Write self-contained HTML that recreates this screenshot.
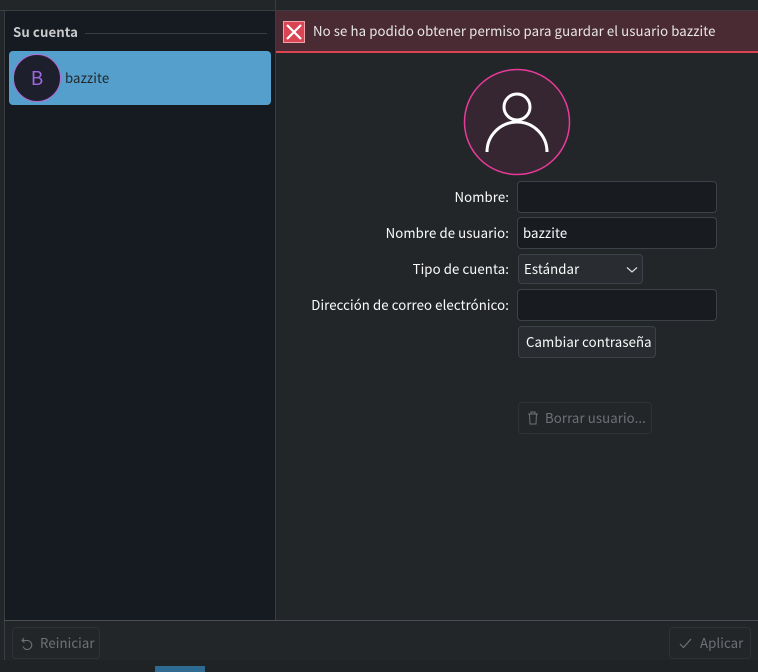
<!DOCTYPE html>
<html><head><meta charset="utf-8"><style>
*{box-sizing:border-box;margin:0;padding:0}
body{width:758px;height:672px;background:#232629;font-family:"Noto Sans CJK JP","Liberation Sans",sans-serif;font-size:13.2px;letter-spacing:0.1px;color:#fcfcfc;position:relative;overflow:hidden}
.a{position:absolute}
.lbl{position:absolute;right:249px;text-align:right;white-space:nowrap;color:#fcfcfc}
.inp{position:absolute;left:517px;width:200px;height:32px;border:1px solid #3d4248;border-radius:4px;background:#181c21}
.btn{position:absolute;border:1px solid #3d4248;border-radius:4px;background:#292c30;white-space:nowrap}
</style></head><body>
<div class="a" style="left:0;top:0;width:758px;height:11px;background:#232629;border-bottom:1px solid #3a3e44"></div>
<div class="a" style="left:275px;top:0;width:1px;height:11px;background:#3a3e44"></div>
<div class="a" style="left:4px;top:11px;width:272px;height:610px;background:#161b21;border-left:1px solid #3a3e44;border-right:1px solid #3a3e44"></div>
<div class="a" style="left:13px;top:22px;font-weight:bold;color:#c8cacc">Su cuenta</div>
<div class="a" style="left:85px;top:33px;width:182px;height:1px;background:#3a3e44"></div>
<div class="a" style="left:9px;top:51px;width:262px;height:54px;background:#549fcc;border-radius:4px"></div>
<div class="a" style="left:13px;top:54px;width:48px;height:48px;border-radius:50%;background:#1e1f2c;border:1.5px solid #b36ad6;color:#9f67e0;font-size:19px;text-align:center;line-height:45px">B</div>
<div class="a" style="left:65px;top:68px;color:#232629">bazzite</div>
<div class="a" style="left:276px;top:11px;width:482px;height:42px;background:#4a2a33;border-bottom:2px solid #da4453"></div>
<svg class="a" style="left:283px;top:21px" width="22" height="22"><rect x="0.5" y="0.5" width="21" height="21" fill="#da4453" stroke="#f0a0a8"/><path d="M4 4L18 18M18 4L4 18" stroke="#fff" stroke-width="2.2"/></svg>
<div class="a" style="left:313px;top:21px;color:#e8e8e8">No se ha podido obtener permiso para guardar el usuario bazzite</div>
<svg class="a" style="left:463px;top:68px" width="108" height="108"><circle cx="54" cy="54" r="52.5" fill="#352632" stroke="#e93a9a" stroke-width="1.5"/><circle cx="54" cy="39" r="13" fill="none" stroke="#fff" stroke-width="3"/><path d="M24 84A30 30 0 0 1 84 84" fill="none" stroke="#fff" stroke-width="3"/></svg>
<div class="lbl" style="top:187px">Nombre:</div>
<div class="inp" style="top:181px"></div>
<div class="lbl" style="top:223px">Nombre de usuario:</div>
<div class="inp" style="top:217px"><span class="a" style="left:5px;top:5px">bazzite</span></div>
<div class="lbl" style="top:259px">Tipo de cuenta:</div>
<div class="btn" style="left:518px;top:254px;width:125px;height:30px"><span class="a" style="left:5px;top:4px">Estándar</span><svg class="a" style="left:107px;top:11px" width="12" height="8"><path d="M1 1.5L6 6L11 1.5" fill="none" stroke="#ddd" stroke-width="1.2"/></svg></div>
<div class="lbl" style="top:295px">Dirección de correo electrónico:</div>
<div class="inp" style="top:289px"></div>
<div class="btn" style="left:518px;top:326px;width:138px;height:32px"><span class="a" style="left:7px;top:5px">Cambiar contraseña</span></div>
<div class="btn" style="left:518px;top:402px;width:134px;height:32px;background:#232629;border-color:#2e3236;color:#6e7175"><svg class="a" style="left:8px;top:8px" width="12" height="14"><path d="M1 3H11M4 3V1H8V3M2.5 3L3 13H9L9.5 3" fill="none" stroke="#6e7175" stroke-width="1"/></svg><span class="a" style="left:26px;top:5px">Borrar usuario...</span></div>
<div class="a" style="left:4px;top:620px;width:754px;height:1px;background:#4a4e54"></div>
<div class="a" style="left:4px;top:621px;width:1px;height:39px;background:#3a3e44"></div>
<div class="btn" style="left:12px;top:627px;width:88px;height:32px;background:#232629;border-color:#2e3236;color:#6e7175"><svg class="a" style="left:8px;top:9px" width="12" height="13"><path d="M3 1L1 3.5L3.5 5.5M1.5 3.5H6A4.5 4.5 0 1 1 2 9.5" fill="none" stroke="#6e7175" stroke-width="1.1"/></svg><span class="a" style="left:27px;top:5px">Reiniciar</span></div>
<div class="btn" style="left:669px;top:627px;width:82px;height:32px;background:#232629;border-color:#2e3236;color:#6e7175"><svg class="a" style="left:9px;top:10px" width="13" height="11"><path d="M1 6L4.5 9.5L12 1" fill="none" stroke="#6e7175" stroke-width="1.2"/></svg><span class="a" style="left:30px;top:5px">Aplicar</span></div>
<div class="a" style="left:0;top:660px;width:758px;height:12px;background:#202326"></div>
<div class="a" style="left:155px;top:666px;width:50px;height:6px;background:#2f6a93"></div>
</body></html>
